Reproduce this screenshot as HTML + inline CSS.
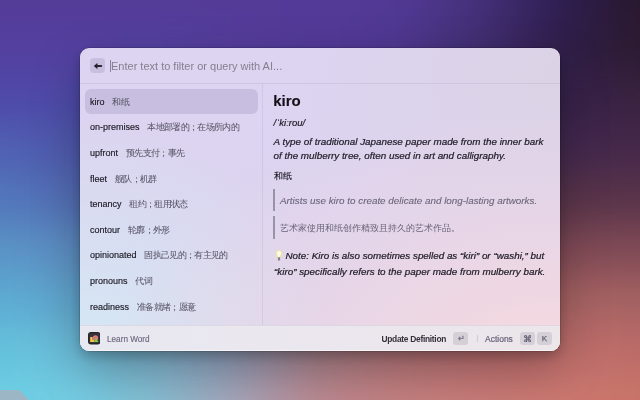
<!DOCTYPE html>
<html><head><meta charset="utf-8">
<style>
*{margin:0;padding:0;box-sizing:border-box}
html,body{width:640px;height:400px;overflow:hidden}
body{position:relative;font-family:"Liberation Sans",sans-serif;background:#543c98}
.win{will-change:transform;position:absolute;left:80px;top:48px;width:480px;height:303px;border-radius:9px;overflow:hidden;
background:
 radial-gradient(ellipse 440px 240px at 470px 303px, rgba(246,217,222,1) 0%, rgba(246,217,222,0.35) 60%, rgba(246,217,222,0) 100%),
 radial-gradient(ellipse 260px 200px at 480px 30px, rgba(220,210,228,0.9) 0%, rgba(220,210,228,0) 100%),
 radial-gradient(ellipse 250px 230px at 0px 300px, rgba(212,232,244,1) 0%, rgba(212,232,244,0) 100%),
 linear-gradient(180deg,#dcd4f1 0%,#dcd3ee 100%);
box-shadow:0 0 0 0.5px rgba(0,0,0,0.25),0 5px 12px rgba(0,0,0,0.22),0 18px 48px rgba(0,0,0,0.26)}
.abs{position:absolute}
.hdr{left:0;top:0;width:480px;height:36px;border-bottom:1px solid rgba(120,110,150,0.13)}
.back{left:10.25px;top:10.25px;width:14.5px;height:14.5px;border-radius:4px;background:rgba(60,40,110,0.12)}
.caret{left:30px;top:12px;width:1px;height:11.5px;background:#8a84a0}
.ph{left:31px;top:10px;font-size:11px;color:#84808f;white-space:nowrap;line-height:16px}
.sel{left:5px;top:41px;width:172.5px;height:25px;border-radius:6px;background:rgba(80,72,130,0.15)}
.vdiv{left:182px;top:36px;width:1px;height:241px;background:rgba(120,100,160,0.12)}
.row{left:10px;font-size:9px;color:#1e1b26;white-space:nowrap;line-height:12px;-webkit-text-stroke:0.16px #1e1b26}
.row span{color:#5a5668;font-size:9px;letter-spacing:-0.65px;margin-left:7.8px;-webkit-text-stroke:0.05px #5a5668}
.h1{left:193.2px;top:44px;font-size:15px;font-weight:bold;color:#131118;line-height:18px;-webkit-text-stroke:0.12px #131118}
.it{font-style:italic;font-size:9.85px;color:#1e1b26;white-space:nowrap;line-height:13.5px;-webkit-text-stroke:0.22px #1e1b26}
.ftr{left:0;top:277px;width:480px;height:26px;background:linear-gradient(90deg,#e7e8f0 0%,#ebe7ef 40%,#ece6ea 100%);border-top:1px solid rgba(120,110,150,0.12)}
.kbd{top:284px;height:13px;border-radius:3px;background:rgba(80,70,100,0.14);font-size:8px;color:#625e72;text-align:center;line-height:13px;font-weight:bold}
</style></head><body>
<!--BG--><div style="position:absolute;left:-80px;top:-60px;width:800px;height:520px;filter:blur(18px)"><div style="position:absolute;left:0;top:0px;width:800px;height:85px;background:linear-gradient(90deg,#543c98 0px,#543c98 80px,#543c98 160px,#543c98 240px,#543b98 320px,#533a98 400px,#513994 480px,#44307a 560px,#2e1e52 640px,#28182c 720px,#28182c 800px)"></div><div style="position:absolute;left:0;top:85px;width:800px;height:50px;background:linear-gradient(90deg,#5440a0 0px,#5440a0 80px,#5440a0 160px,#5340a0 240px,#533c9a 320px,#523a98 400px,#4e3890 480px,#402e70 560px,#301e4a 640px,#2c1a30 720px,#2c1a30 800px)"></div><div style="position:absolute;left:0;top:135px;width:800px;height:50px;background:linear-gradient(90deg,#4e4aa8 0px,#4e4aa8 80px,#4e4aa8 160px,#5048a2 240px,#4e4298 320px,#4a3c90 400px,#463480 480px,#3e2a60 560px,#36224a 640px,#3a2240 720px,#3a2240 800px)"></div><div style="position:absolute;left:0;top:185px;width:800px;height:50px;background:linear-gradient(90deg,#5062b4 0px,#5062b4 80px,#4e58aa 160px,#5258a8 240px,#50509c 320px,#4c4490 400px,#4a3a80 480px,#443068 560px,#42284e 640px,#46284a 720px,#46284a 800px)"></div><div style="position:absolute;left:0;top:235px;width:800px;height:50px;background:linear-gradient(90deg,#5278bc 0px,#5278bc 80px,#526cb2 160px,#5a6cae 240px,#5c60a0 320px,#5c5090 400px,#5c4480 480px,#5c3c66 560px,#583448 640px,#5a344a 720px,#5a344a 800px)"></div><div style="position:absolute;left:0;top:285px;width:800px;height:50px;background:linear-gradient(90deg,#5a94c6 0px,#5a94c6 80px,#5c8cc0 160px,#6080b4 240px,#6a70a0 320px,#705e88 400px,#785478 480px,#7e4c62 560px,#804a56 640px,#804a56 720px,#804a56 800px)"></div><div style="position:absolute;left:0;top:335px;width:800px;height:50px;background:linear-gradient(90deg,#5cacd4 0px,#5cacd4 80px,#60a4cc 160px,#6898bc 240px,#7888a8 320px,#886c8c 400px,#986478 480px,#a25e68 560px,#a66262 640px,#a46262 720px,#a46262 800px)"></div><div style="position:absolute;left:0;top:385px;width:800px;height:50px;background:linear-gradient(90deg,#64c2dc 0px,#64c2dc 80px,#6cbcd8 160px,#7cb0cc 240px,#9098b4 320px,#a88088 400px,#b47478 480px,#bc6e70 560px,#be6e6c 640px,#bc6c68 720px,#bc6c68 800px)"></div><div style="position:absolute;left:0;top:435px;width:800px;height:85px;background:linear-gradient(90deg,#6cd0e4 0px,#6cd0e4 80px,#74cce2 160px,#88bcd0 240px,#a8a4b8 320px,#bc8890 400px,#c48080 480px,#c87c78 560px,#cc7870 640px,#c87468 720px,#c87468 800px)"></div></div><!--/BG-->
<svg style="position:absolute;left:0;top:388px" width="32" height="12"><path d="M0 2 H19 L29 12 H0 Z" fill="#9db6c6"/></svg>
<div class="win">
  <div class="abs hdr"></div>
  <div class="abs back"><svg width="15" height="15" viewBox="0 0 15 15" style="position:absolute;left:0;top:0"><path d="M4.2 8 L7.2 5.5 L7.2 10.5 Z" fill="#15121c" stroke="#15121c" stroke-width="0.5" stroke-linejoin="round"/><path d="M6.8 8 H11.3" stroke="#2a2632" stroke-width="1.8" stroke-linecap="round"/></svg></div>
  <div class="abs caret"></div>
  <div class="abs ph">Enter text to filter or query with AI...</div>

  <div class="abs sel"></div>
  <div class="abs vdiv"></div>
  <div class="abs row" style="top:47.70px">kiro<span>和纸</span></div>
  <div class="abs row" style="top:73.30px">on-premises<span>本地部署的；在场所内的</span></div>
  <div class="abs row" style="top:98.90px">upfront<span>预先支付；事先</span></div>
  <div class="abs row" style="top:124.50px">fleet<span>舰队；机群</span></div>
  <div class="abs row" style="top:150.10px">tenancy<span>租约；租用状态</span></div>
  <div class="abs row" style="top:175.70px">contour<span>轮廓；外形</span></div>
  <div class="abs row" style="top:201.30px">opinionated<span>固执己见的；有主见的</span></div>
  <div class="abs row" style="top:226.90px">pronouns<span>代词</span></div>
  <div class="abs row" style="top:252.50px">readiness<span>准备就绪；愿意</span></div>

  <div class="abs h1">kiro</div>
  <div class="abs it" style="left:193.5px;top:67.5px;font-size:9.5px">/ˈkiːrou/</div>
  <div class="abs it" style="left:193.5px;top:87px">A type of traditional Japanese paper made from the inner bark<br>of the mulberry tree, often used in art and calligraphy.</div>
  <div class="abs" style="left:193.5px;top:122px;font-size:9px;color:#1e1b26;line-height:12px;-webkit-text-stroke:0.15px #1e1b26">和纸</div>
  <div class="abs" style="left:193px;top:141px;width:2px;height:22px;background:#9894a6"></div>
  <div class="abs it" style="left:200px;top:146px;color:#6a667a;-webkit-text-stroke:0.1px #6a667a">Artists use kiro to create delicate and long-lasting artworks.</div>
  <div class="abs" style="left:193px;top:168px;width:2px;height:23px;background:#9894a6"></div>
  <div class="abs" style="left:200px;top:174px;font-size:9px;color:#686478;line-height:12px">艺术家使用和纸创作精致且持久的艺术作品。</div>
  <svg class="abs" style="left:194px;top:200px" width="10" height="14" viewBox="0 0 10 14">
    <path d="M5 2.5 A2.7 2.7 0 0 1 7.2 6.8 L6.3 9.3 H3.7 L2.8 6.8 A2.7 2.7 0 0 1 5 2.5 Z" fill="#fcfaf2" stroke="#f2e694" stroke-width="1.1" stroke-linejoin="round"/>
    <rect x="3.9" y="9.3" width="2.2" height="3.1" rx="0.5" fill="#85818e"/>
  </svg>
  <div class="abs it" style="left:205.5px;top:201px">Note: Kiro is also sometimes spelled as “kiri” or “washi,” but</div>
  <div class="abs it" style="left:194px;top:216.5px">“kiro” specifically refers to the paper made from mulberry bark.</div>

  <div class="abs ftr"></div>
  <div class="abs" style="left:0;top:302px;width:480px;height:1px;background:rgba(255,255,255,0.6)"></div>
  <svg class="abs" style="left:7.8px;top:284px" width="12.5" height="12.5" viewBox="0 0 12.5 12.5">
    <rect x="0" y="0" width="12.5" height="12.5" rx="3" fill="#25252b"/>
    <rect x="1.2" y="1.3" width="10.1" height="9.8" rx="1" fill="#34343a"/>
    <path d="M2.2 5 H4.6 V7.6 L6.4 8.6 V10 H2.2 Z" fill="#f2c84a"/>
    <circle cx="7.4" cy="6" r="2.8" fill="#d27a78"/>
    <path d="M6.2 8.5 H7.3 V7 Q8.1 6.1 9 7 V8.5 H10.2 V10 H6.2 Z" fill="#84cf46"/>
  </svg>
  <div class="abs" style="left:27px;top:287px;font-size:8.2px;color:#6e6880;line-height:10px;-webkit-text-stroke:0.15px #6e6880">Learn Word</div>
  <div class="abs" style="left:301.5px;top:286px;font-size:8.4px;letter-spacing:-0.28px;font-weight:bold;color:#34303c;line-height:10px">Update Definition</div>
  <div class="abs kbd" style="left:373px;width:15px;text-indent:1.6px;font-weight:normal;color:#6e6a80;-webkit-text-stroke:0.25px #6e6a80">↵</div>
  <div class="abs" style="left:396.5px;top:287px;width:1px;height:6.5px;background:rgba(110,100,130,0.2)"></div>
  <div class="abs" style="left:405px;top:286px;font-size:8.5px;color:#68627a;line-height:10px;-webkit-text-stroke:0.2px #68627a">Actions</div>
  <div class="abs kbd" style="left:440px;width:15px"></div>
  <svg class="abs" style="left:443.9px;top:286.7px" width="7.5" height="7.5" viewBox="0 0 10 10"><path d="M3.6 3.6 H6.4 V6.4 H3.6 Z M3.6 3.6 V2.2 A1.4 1.4 0 1 0 2.2 3.6 H3.6 M6.4 3.6 V2.2 A1.4 1.4 0 1 1 7.8 3.6 H6.4 M3.6 6.4 V7.8 A1.4 1.4 0 1 1 2.2 6.4 H3.6 M6.4 6.4 V7.8 A1.4 1.4 0 1 0 7.8 6.4 H6.4" fill="none" stroke="#666276" stroke-width="1.4"/></svg>
  <div class="abs kbd" style="left:457px;width:15px;font-weight:normal;color:#625e72;-webkit-text-stroke:0.25px #625e72">K</div>
</div>
</body></html>
